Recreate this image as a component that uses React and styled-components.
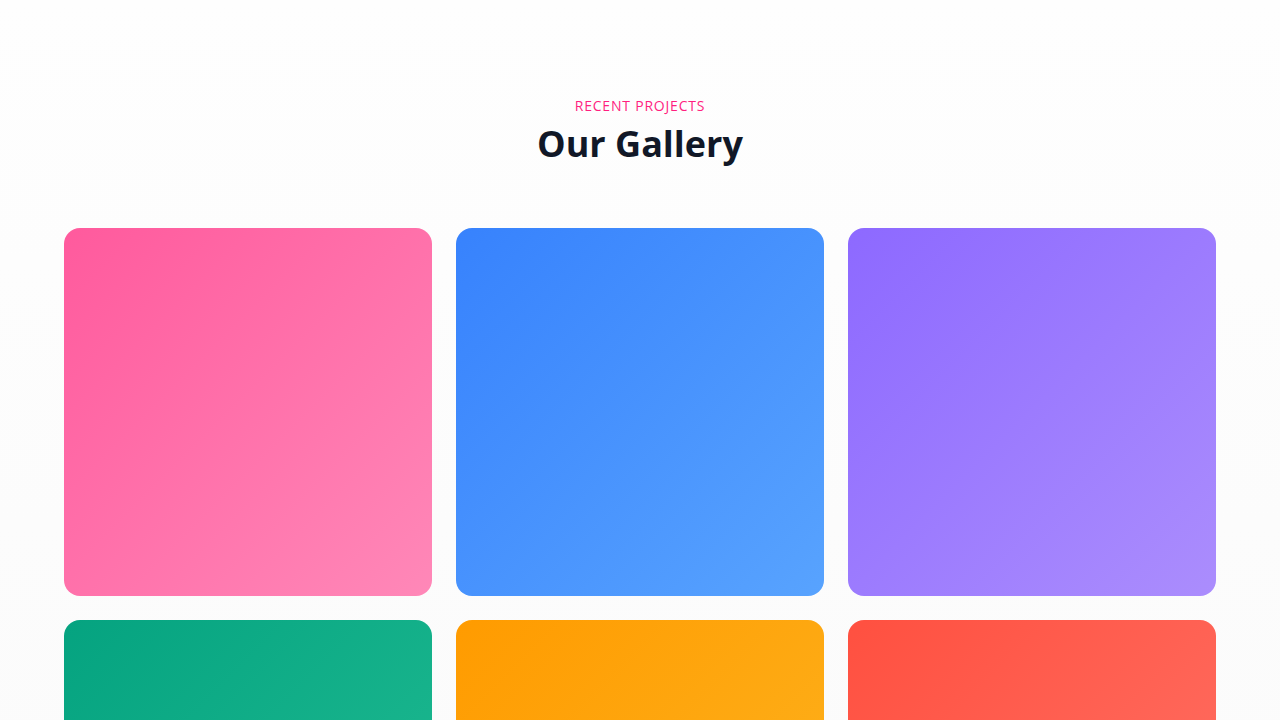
import React from 'react'
import styled, { createGlobalStyle } from 'styled-components'

const GlobalStyle = createGlobalStyle`
  * { box-sizing: border-box; }
  body {
    margin: 0;
    font-family: 'Open Sans', 'Noto Sans', sans-serif;
    background: linear-gradient(180deg, #fefefe 0%, #fafafa 100%);
    min-height: 100vh;
  }
`

const Section = styled.section`
  padding: 96px 64px 64px;
`

const Header = styled.header`
  display: flex;
  flex-direction: column;
  align-items: center;
  margin-bottom: 60px;
`

const Eyebrow = styled.span`
  font-size: 14px;
  line-height: 20px;
  letter-spacing: 0.8px;
  text-transform: uppercase;
  color: #ff1f7f;
`

const Title = styled.h2`
  margin: 4px 0 0;
  font-size: 36px;
  line-height: 48px;
  font-weight: 700;
  color: #111827;
`

const Grid = styled.div`
  display: grid;
  grid-template-columns: repeat(3, 1fr);
  gap: 24px;
`

const Tile = styled.div`
  aspect-ratio: 1 / 1;
  border-radius: 16px;
  background: linear-gradient(135deg, ${p => p.from} 0%, ${p => p.to} 100%);
`

const tiles = [
  { from: '#ff5a9d', to: '#ff88b8' },
  { from: '#3782fd', to: '#58a3fe' },
  { from: '#8d69ff', to: '#ab8dfd' },
  { from: '#05a380', to: '#22bd93' },
  { from: '#ff9b00', to: '#fdb521' },
  { from: '#ff5040', to: '#ff7468' },
]

const App = () => {
  return (
    <>
      <GlobalStyle />
      <Section>
        <Header>
          <Eyebrow>Recent Projects</Eyebrow>
          <Title>Our Gallery</Title>
        </Header>
        <Grid>
          {tiles.map((t, i) => (
            <Tile key={i} from={t.from} to={t.to} />
          ))}
        </Grid>
      </Section>
    </>
  )
}

export default App
